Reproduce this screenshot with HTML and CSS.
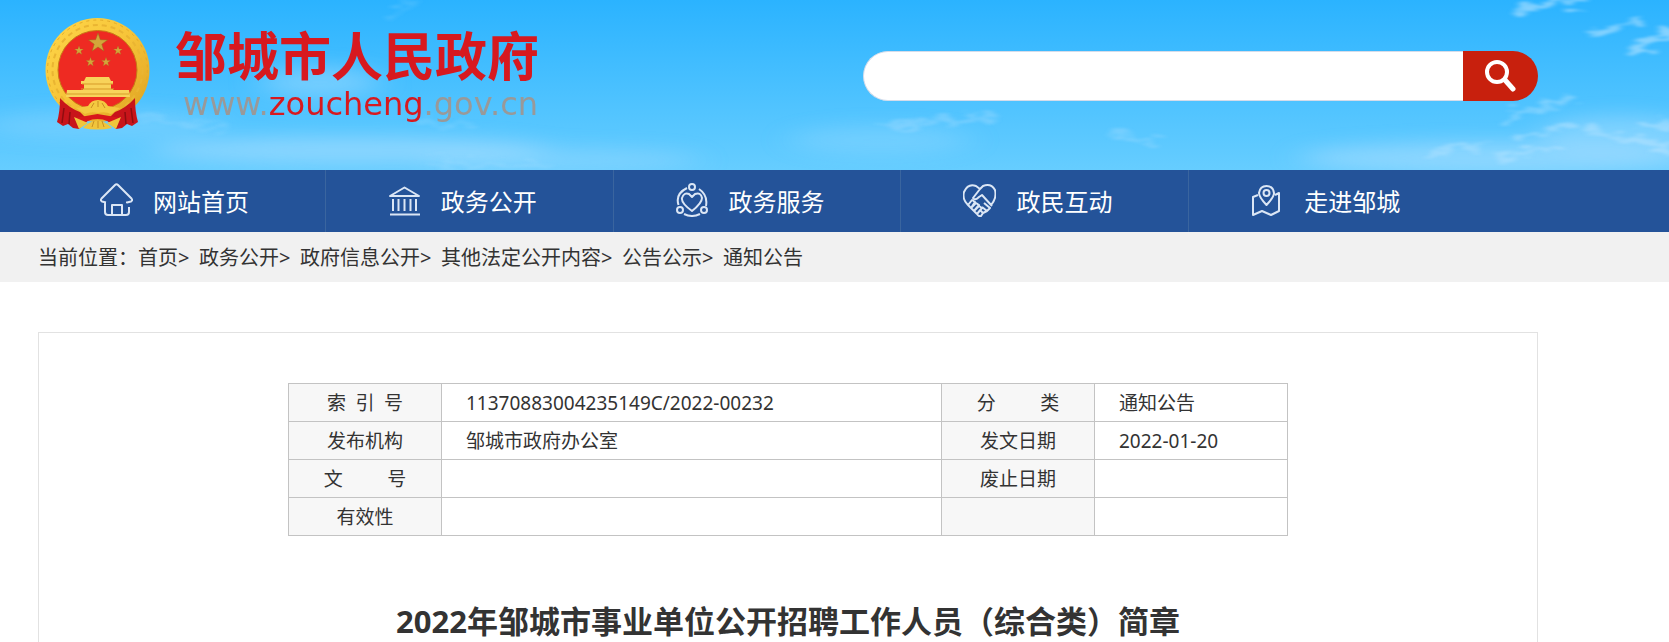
FILE: index.html
```html
<!DOCTYPE html>
<html lang="zh-CN">
<head>
  <meta charset="UTF-8">
  <meta name="viewport" content="width=device-width, initial-scale=1.0">
  <title>2022年邹城市事业单位公开招聘工作人员（综合类）简章</title>
  <link rel="stylesheet" href="styles.css">
</head>
<body>
  <header class="header">
    <!-- sky -->
    <svg class="sky" viewBox="0 0 1669 170" preserveAspectRatio="none" aria-hidden="true">
      <defs>
        <filter id="soft" x="-30%" y="-80%" width="160%" height="260%"><feGaussianBlur stdDeviation="16 9"/></filter>
        <filter id="wisp" x="-20%" y="-50%" width="140%" height="200%">
          <feTurbulence type="fractalNoise" baseFrequency="0.06 0.12" numOctaves="4" seed="4" result="n"/>
          <feDisplacementMap in="SourceGraphic" in2="n" scale="26" xChannelSelector="R" yChannelSelector="G"/>
          <feGaussianBlur stdDeviation="3 1"/>
        </filter>
      </defs>
      <g fill="#b5e2ff" filter="url(#soft)">
        <ellipse cx="350" cy="150" rx="200" ry="13" opacity=".5"/>
        <ellipse cx="100" cy="125" rx="120" ry="14" opacity=".25"/>
        <ellipse cx="320" cy="82" rx="60" ry="16" opacity=".4"/>
        <ellipse cx="880" cy="140" rx="90" ry="14" opacity=".25"/>
        <ellipse cx="560" cy="160" rx="140" ry="12" opacity=".3"/>
        <ellipse cx="1500" cy="158" rx="200" ry="16" opacity=".5"/>
        <ellipse cx="1620" cy="135" rx="80" ry="20" opacity=".4"/>
      </g>
      <g fill="none" stroke="#d3edff" stroke-linecap="round" filter="url(#wisp)">
        <path d="M885 126q50-4 110-10M1110 134l45 8" stroke-width="5" opacity=".25"/>
        <path d="M1512 14l40-12M1530 6l60-6" stroke-width="5" opacity=".5"/>
        <path d="M1594 34l48-16" stroke-width="4" opacity=".5"/>
        <path d="M1634 48l35-14" stroke-width="9" opacity=".5"/>
        <path d="M1508 118l62-20M1520 140l50-16M1590 130l79 18M1640 128l29-6" stroke-width="6" opacity=".35"/>
        <path d="M1430 154l50-10M1500 158l60-14" stroke-width="6" opacity=".3"/>
        <path d="M420 122q30 4 55 2M390 16l22-14M430 162l120 4M120 114l100 14" stroke-width="5" opacity=".15"/>
      </g>
    </svg>
    <div class="wrap header-inner">
      <a class="logo" href="#">
        <svg class="emblem" viewBox="5 8 106 112" aria-hidden="true">
          <defs>
            <linearGradient id="gold" x1="0" y1="0" x2="1" y2="1">
              <stop offset="0" stop-color="#ffd84a"/>
              <stop offset=".5" stop-color="#f6c338"/>
              <stop offset="1" stop-color="#dca01f"/>
            </linearGradient>
            <path id="star" d="M0-10 2.4-3.2 9.5-3.1 3.8 1.2 5.9 8.1 0 4-5.9 8.1-3.8 1.2-9.5-3.1-2.4-3.2z"/>
          </defs>
          <circle cx="57.5" cy="60" r="52" fill="url(#gold)"/>
          <circle cx="57.5" cy="60" r="50" fill="none" stroke="#e3ab29" stroke-width="1" stroke-dasharray="3 4"/>
          <circle cx="57.5" cy="60" r="45" fill="none" stroke="#eab532" stroke-width="2" stroke-dasharray="5 4"/>
          <circle cx="57.5" cy="60" r="39.5" fill="#ee2a22" stroke="#c77a16" stroke-width="1"/>
          <!-- drapes on both sides -->
          <path d="M20 88q9 10 20 14l8 8-9 9-6-1-5-4-5 2-6-4q3-10 3-24zM95 88q-9 10-20 14l-8 8 9 9 6-1 5-4 5 2 6-4q-3-10-3-24z" fill="#c8141a"/>
          <path d="M24 98l-2 15M30 102l-1 12M85 102l1 12M91 98l2 15" stroke="#8f0d10" stroke-width="1.5"/>
          <g fill="#d3a63a" stroke="#9a6a1c" stroke-width=".5">
            <use href="#star" transform="translate(58 33)"/>
            <use href="#star" transform="translate(39 40.5) scale(.48)"/>
            <use href="#star" transform="translate(78 40.5) scale(.48)"/>
            <use href="#star" transform="translate(50.5 52) scale(.48)"/>
            <use href="#star" transform="translate(66 52) scale(.48)"/>
          </g>
          <path d="M46 67h23l2 4h2v3H41v-3h3zM44 74h27v5H44zM43 79h30v1h16l1 7H26l1-7h16z" fill="#f8d35a"/>
          <path d="M42 74h31M41 79h33M27 84h62" stroke="#d79b28" stroke-width="1"/>
          <path d="M36 98l12-2q3-6 10-6t10 6l12 2-9 6q-6-3-13-1-7-2-13 1z" fill="#f4c940"/>
          <path d="M34 108q12-2 23.5-4 12 2 23.5 4l-6 10q-6-9-17.5-9T40 118z" fill="#d8171b"/>
          <path d="M34 107l14 6-9 6zM81 107l-14 6 9 6zM43 118q14-15 29 0-15 3-29 0z" fill="#f0c53c"/>
          <path d="M51 98l3-5M58 97v-6M65 98l-3-5M52 117l2-6M58 118v-7M64 117l-2-6" stroke="#c98f22" stroke-width="1"/>
        </svg>
        <span class="logo-text">
          <span class="logo-name">邹城市人民政府</span>
          <span class="logo-url">www.<b>zoucheng</b>.gov.cn</span>
        </span>
      </a>
      <form class="search">
        <input type="text" name="q" aria-label="搜索">
        <button type="submit" aria-label="搜索">
          <svg viewBox="0 0 32 32" width="32" height="32" fill="none" stroke="#fff" stroke-linecap="round">
            <circle cx="12" cy="12" r="10" stroke-width="4"/>
            <path d="M20 20l8 9" stroke-width="5"/>
          </svg>
        </button>
      </form>
    </div>
  </header>

  <nav class="nav">
    <ul class="wrap">
      <li><a href="#">
        <svg viewBox="0 0 33 34"><path d="M6 19.5l-4-1q-2-1-.5-3L15 2q1.500-1.500 3 0l13.500 13.500q1.500 2-.5 3l-4 1v-1M5 19v10q0 3 3 3h18q3 0 3-3v-5M12 32V22h10v10"/></svg>
        网站首页</a></li>
      <li><a href="#">
        <svg viewBox="0 0 33 34"><path d="M2 13L16.500 4.500 31 13zM5 16v12M10.500 16v12M16.500 16v12M22.500 16v12M28 16v12M2 31.500h30"/></svg>
        政务公开</a></li>
      <li><a href="#">
        <svg viewBox="0 0 33 34"><circle cx="16" cy="4" r="3"/><circle cx="4" cy="27" r="3"/><circle cx="28" cy="27" r="3"/><path d="M11 5Q-1 11 2.500 22M23 6q9 6 7 17M8 31q8 4 16 0M16 28Q5 20 6 15q2-6 7-4l3 3 3-3q6-2 7 4 0 5-10 13z"/></svg>
        政务服务</a></li>
      <li><a href="#">
        <svg viewBox="0 0 33 34"><path d="M5 22Q-1 16 1 9q4-9 12-6l4 3 3-3q8-3 12 4 2 8-4 15M17 6l-7 9q2 3 6-1l3-2 10 11M5 22l4-5 3 2-4 6zM8 25l5-5 3 2-5 6zM11 28l5-5 3 2-5 6zM14 31l3-4 3 3-2 3q-2 1-4-2M20 30l4-2-5-4M24 28l3-3-6-5"/></svg>
        政民互动</a></li>
      <li><a href="#">
        <svg viewBox="0 0 33 34"><path d="M15.500 22Q8 14 8 10q1-7 7.500-7T23 10q0 4-7.500 12zM7 12l-5 2v18l9-4 9 4 8-4V10l-4 2"/><circle cx="15.500" cy="10" r="3"/></svg>
        走进邹城</a></li>
    </ul>
  </nav>

  <div class="crumbs">
    <div class="wrap">
      <span>当前位置：</span>
      <a href="#">首页</a><i>&gt;</i>
      <a href="#">政务公开</a><i>&gt;</i>
      <a href="#">政府信息公开</a><i>&gt;</i>
      <a href="#">其他法定公开内容</a><i>&gt;</i>
      <a href="#">公告公示</a><i>&gt;</i>
      <a href="#">通知公告</a>
    </div>
  </div>

  <div class="wrap">
    <main class="article">
      <table class="info">
        <colgroup>
          <col class="col-label"><col class="col-wide"><col class="col-label"><col>
        </colgroup>
        <tr>
          <th scope="row">索&ensp;引&ensp;号</th><td>11370883004235149C/2022-00232</td>
          <th scope="row">分&emsp;&emsp;&emsp13;类</th><td>通知公告</td>
        </tr>
        <tr>
          <th scope="row">发布机构</th><td>邹城市政府办公室</td>
          <th scope="row">发文日期</th><td>2022-01-20</td>
        </tr>
        <tr>
          <th scope="row">文&emsp;&emsp;&emsp13;号</th><td></td>
          <th scope="row">废止日期</th><td></td>
        </tr>
        <tr>
          <th scope="row">有效性</th><td></td>
          <th></th><td></td>
        </tr>
      </table>
      <h1>2022年邹城市事业单位公开招聘工作人员（综合类）简章</h1>
    </main>
  </div>
</body>
</html>
```
FILE: styles.css
```css
* {
  box-sizing: border-box;
}

body {
  margin: 0;
  font-family: "Noto Sans", "Noto Sans CJK SC", sans-serif;
  color: #333;
  background: #fff;
}

a {
  color: inherit;
  text-decoration: none;
}

.wrap {
  max-width: 1500px;
  margin: 0 131px 0 38px;
}

/* header */
.header {
  position: relative;
  background: linear-gradient(#2bb3ff, #66cdff);
}

.sky {
  position: absolute;
  top: 0;
  left: 0;
  width: 100%;
  height: 100%;
}

.header-inner {
  position: relative;
  display: flex;
  justify-content: space-between;
  height: 170px;
}

.logo {
  display: flex;
  gap: 24px;
  padding: 18px 0 0 7px;
}

.emblem {
  width: 106px;
  height: 112px;
}

.logo-text {
  display: flex;
  flex-direction: column;
  padding-top: 6px;
}

.logo-name {
  font-family: "Noto Sans CJK SC", sans-serif;
  font-size: 52px;
  font-weight: 700;
  line-height: 60px;
  color: #d7191f;
}

.logo-url {
  padding-left: 8px;
  font-family: "DejaVu Sans", sans-serif;
  font-size: 32px;
  line-height: 40px;
  color: #999;
}

.logo-url b {
  font-weight: normal;
  color: #d7191f;
}

.search {
  display: flex;
  width: 45%;
  height: 50px;
  margin-top: 51px;
}

.search input {
  flex: 1;
  min-width: 0;
  padding: 0 24px;
  border: 1px solid #d5dcea;
  border-right: 0;
  border-radius: 25px 0 0 25px;
  font-size: 20px;
  background: #fff;
}

.search button {
  display: flex;
  align-items: center;
  justify-content: center;
  width: 75px;
  padding: 0;
  border: 0;
  border-radius: 0 25px 25px 0;
  background: #c8200d;
  cursor: pointer;
}

/* nav */
.nav {
  background: #245399;
}

.nav ul {
  display: flex;
  padding: 0 62px 0 0;
  list-style: none;
}

.nav li {
  flex: 1;
  border-right: 1px solid #3a659f;
}

.nav li:last-child {
  border-right: 0;
}

.nav a {
  display: flex;
  align-items: center;
  gap: 20px;
  height: 62px;
  padding: 0 0 2px 62px;
  font-size: 24px;
  color: #fff;
}

.nav svg {
  width: 33px;
  height: 34px;
  fill: none;
  stroke: #dbe6f5;
  stroke-width: 2;
  stroke-linejoin: round;
}

/* breadcrumb */
.crumbs {
  background: #f1f1f1;
}

.crumbs .wrap {
  display: flex;
  height: 50px;
  padding-top: 2px;
  font-size: 20px;
  line-height: 48px;
}

.crumbs i {
  width: 21px;
  font-style: normal;
}

/* article */
.article {
  margin-top: 50px;
  padding: 50px 0;
  border: 1px solid #e2e2e2;
}

.info {
  width: 1000px;
  max-width: 100%;
  margin: 0 auto;
  border-collapse: collapse;
  table-layout: fixed;
  font-size: 19px;
}

.col-label {
  width: 153px;
}

.col-wide {
  width: 500px;
}

.info th,
.info td {
  height: 38px;
  padding: 0;
  border: 1px solid #c3c3c3;
  line-height: 36px;
}

.info th {
  font-weight: normal;
  background: #f7f7f7;
}

.info td {
  padding-left: 24px;
}

.article h1 {
  margin: 60px 0 0;
  font-size: 31px;
  line-height: 50px;
  text-align: center;
}
```
